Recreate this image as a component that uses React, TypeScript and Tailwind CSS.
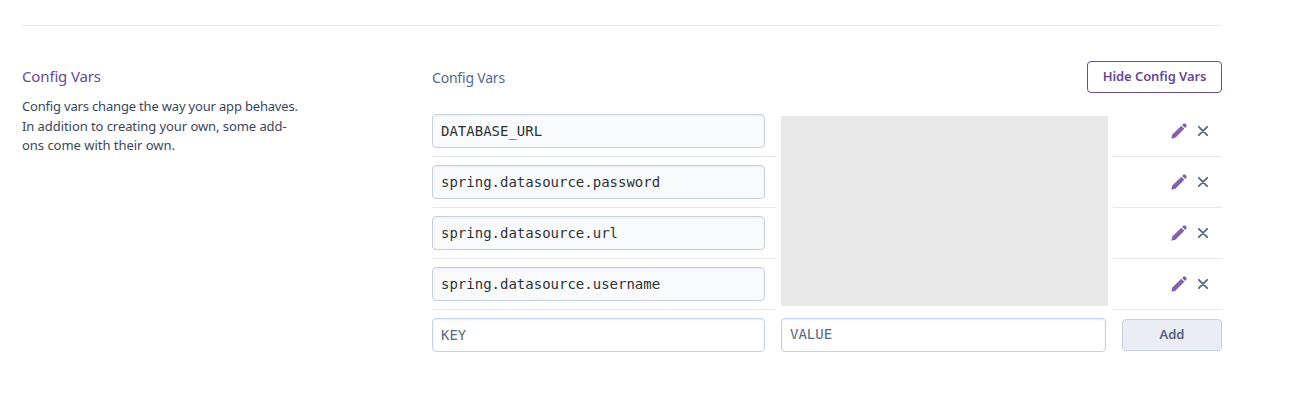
const keys = [
  'DATABASE_URL',
  'spring.datasource.password',
  'spring.datasource.url',
  'spring.datasource.username',
];

const field =
  'block h-[34px] w-full rounded-[4px] border border-[#c6d0e3] px-2 text-[14px] leading-5 shadow-[inset_0_1px_2px_#e9ecf4] outline-none font-["DejaVu_Sans_Mono",monospace]';

function PencilIcon() {
  return (
    <svg width="16" height="16" viewBox="0 0 16 16" fill="#8560aa">
      <path d="M0.3 15.7 L1.3 11.6 L10.3 2.7 L13.3 5.7 L4.4 14.7 Z" />
      <path d="M11.1 1.9 L12.2 0.8 Q13.3 -0.1 14.4 0.8 L15.2 1.6 Q16.1 2.7 15.2 3.8 L14.1 4.9 Z" />
    </svg>
  );
}

function CrossIcon() {
  return (
    <svg width="10" height="10" viewBox="0 0 10 10" fill="none" stroke="#596981" strokeWidth="1.8" strokeLinecap="round">
      <path d="M0.8 0.8 L9.2 9.2 M9.2 0.8 L0.8 9.2" />
    </svg>
  );
}

export default function App() {
  return (
    <div className='h-[410px] w-[1305px] overflow-hidden bg-white pt-[25px] pl-[22px] font-["Noto_Sans",sans-serif]'>
      <main className="flex w-[1200px] border-t border-[#e6e8ee]">
        <section className="w-[410px] shrink-0 pt-[39px] whitespace-nowrap">
          <h2 className="h-[22px] text-[15px] leading-[22px] tracking-[-0.15px] text-[#6b4897]">Config Vars</h2>
          <p className="mt-[10px] text-[13px] leading-[19.5px] text-[#3a4660]">
            <span className="tracking-[-0.18px]">Config vars change the way your app behaves.</span>
            <br />
            <span className="tracking-[-0.07px]">In addition to creating your own, some add-</span>
            <br />
            <span className="tracking-[-0.03px]">ons come with their own.</span>
          </p>
        </section>

        <section className="w-[790px] pt-[35px]">
          <header className="flex h-8 items-center justify-between">
            <h3 className="pt-[2px] text-[14px] leading-5 tracking-[-0.2px] text-[#54678a]">Config Vars</h3>
            <button className="h-8 w-[135px] rounded-[4px] border border-[#6e4d98] text-[13px] font-semibold tracking-[-0.07px] whitespace-nowrap text-[#6b4897]">
              Hide Config Vars
            </button>
          </header>

          <div className="mt-[13px] flex justify-between">
            <div className="w-[344px]">
              {keys.map((key) => (
                <div key={key} className="h-[51px] border-b border-[#e3e6ee] py-2 pr-[11px]">
                  <div className={`${field} bg-[#f9fafc] pt-[6px] text-[#303236]`}>{key}</div>
                </div>
              ))}
            </div>
            <div className="mt-[10px] h-[190px] w-[327px] bg-[#e8e8e8]" />
            <div className="w-[109px]">
              {keys.map((key) => (
                <div key={key} className="flex h-[51px] items-center justify-end gap-[11px] border-b border-[#e3e6ee] pr-[14px]">
                  <button aria-label="Edit">
                    <PencilIcon />
                  </button>
                  <button aria-label="Delete">
                    <CrossIcon />
                  </button>
                </div>
              ))}
            </div>
          </div>

          <div className="mt-2 flex items-center gap-4">
            <div className="w-[333px]">
              <input placeholder="KEY" className={`${field} bg-white placeholder:text-[#596981]`} />
            </div>
            <div className="w-[325px]">
              <input placeholder="VALUE" className={`${field} bg-white pb-[2px] placeholder:text-[#596981]`} />
            </div>
            <button className="h-8 w-[100px] rounded-[4px] border border-[#c6d0e3] bg-[#ebedf5] text-[13px] font-semibold text-[#54607a]">
              Add
            </button>
          </div>
        </section>
      </main>
    </div>
  );
}
